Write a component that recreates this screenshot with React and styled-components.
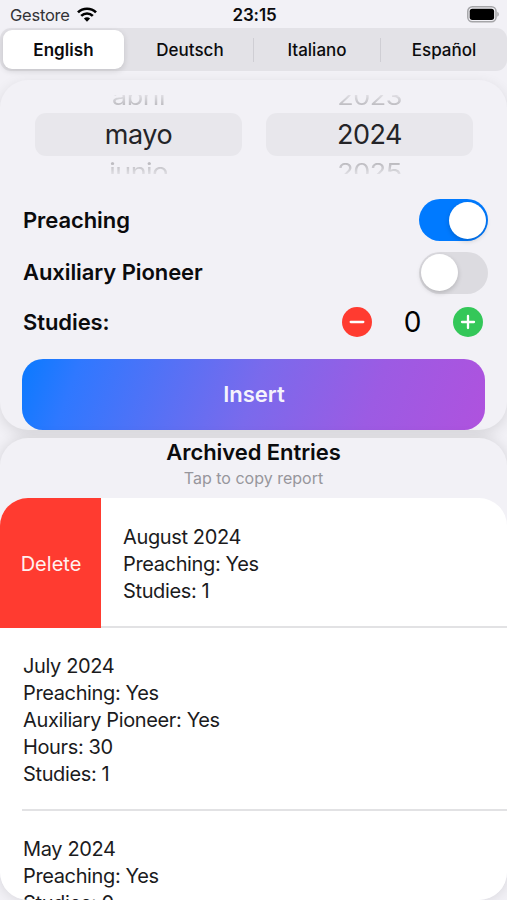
import React from 'react';
import styled, { createGlobalStyle } from 'styled-components';

const GlobalStyle = createGlobalStyle`
  * {
    box-sizing: border-box;
  }

  body {
    margin: 0;
    background: #f2f1f6;
    font-family: Inter, 'Liberation Sans', sans-serif;
    color: #0b0b0d;
  }

  button {
    font-family: inherit;
    border: none;
    padding: 0;
    margin: 0;
    color: inherit;
  }
`;

// Styled components
const Screen = styled.div`
  height: 900px;
  display: flex;
  flex-direction: column;
  overflow: hidden;
  background: #f2f1f6;
`;

const StatusBar = styled.header`
  display: grid;
  grid-template-columns: 1fr auto 1fr;
  align-items: center;
  height: 28px;
  padding: 1px 8px 0 10px;
  flex-shrink: 0;
`;

const Carrier = styled.div`
  display: flex;
  align-items: center;
  gap: 7px;
  font-size: 16.5px;
  letter-spacing: -0.25px;
  color: #333336;
`;

const Clock = styled.div`
  font-size: 17px;
  font-weight: 600;
  letter-spacing: -0.1px;
`;

const BatteryIcon = styled.svg`
  justify-self: end;
`;

const Segments = styled.nav`
  display: flex;
  align-items: center;
  height: 43px;
  padding: 2px 0 2px 3px;
  background: #e3e2e7;
  border-radius: 11px;
  flex-shrink: 0;
`;

const Segment = styled.button`
  flex: ${(props) => (props.$active ? '0 0 121px' : '1')};
  height: ${(props) => (props.$active ? '39px' : '24px')};
  margin-right: ${(props) => (props.$active ? '3px' : '0')};
  background: ${(props) => (props.$active ? '#ffffff' : 'transparent')};
  border-radius: ${(props) => (props.$active ? '9px' : '0')};
  border-left: ${(props) => (props.$divider ? '1px solid #cfced4' : 'none')};
  box-shadow: ${(props) => (props.$active ? '0 2px 6px rgba(0, 0, 0, 0.14)' : 'none')};
  font-size: 17px;
  font-weight: ${(props) => (props.$active ? 600 : 500)};
  letter-spacing: ${(props) => (props.$active ? '0.05px' : '0')};
`;

const Cards = styled.main`
  flex: 1;
  min-height: 0;
  display: flex;
  flex-direction: column;
  gap: 8px;
  padding-top: 9px;
`;

const Card = styled.section`
  background: #f2f1f6;
  border-radius: 28px;
  box-shadow: 0 0 14px rgba(0, 0, 0, 0.12);
`;

const FormCard = styled(Card)`
  height: 350px;
  padding: 15px 22px 0;
  flex-shrink: 0;
  box-shadow: 0 4px 14px rgba(0, 0, 0, 0.11);
`;

const ArchiveCard = styled(Card)`
  flex: 1;
  min-height: 0;
  display: flex;
  flex-direction: column;
`;

const Pickers = styled.div`
  display: grid;
  grid-template-columns: 207px 207px;
  gap: 24px;
  padding-left: 13px;
`;

const Wheel = styled.div`
  display: flex;
  flex-direction: column;
  height: 79px;
  text-align: center;
  font-size: 27px;
  overflow: hidden;
`;

const WheelNeighbor = styled.div`
  height: 18px;
  display: flex;
  flex-direction: column;
  align-items: center;
  justify-content: ${(props) => (props.$above ? 'flex-end' : 'flex-start')};
  overflow: hidden;
  color: #b5b4b9;
  mask-image: linear-gradient(${(props) => (props.$above ? 'to bottom' : 'to top')}, rgba(0, 0, 0, 0.3), #000 70%);

  span {
    display: block;
    line-height: 28px;
    flex-shrink: 0;
    letter-spacing: -0.5px;
    transform: scaleY(0.85);
    transform-origin: ${(props) => (props.$above ? 'bottom' : 'top')};
    margin: ${(props) => (props.$above ? '0 0 4px' : '4px 0 0')};
  }
`;

const WheelValue = styled.div`
  height: 43px;
  flex-shrink: 0;
  line-height: 44px;
  border-radius: 11px;
  background: #e8e7ec;
  color: #242428;
  letter-spacing: -0.5px;
`;

const FormRow = styled.div`
  display: flex;
  align-items: center;
  justify-content: space-between;
  height: ${(props) => props.$height}px;
  padding-left: 1px;
`;

const Fields = styled.div`
  padding-top: 20px;
  height: 185px;
`;

const Label = styled.span`
  padding-bottom: 1px;
  font-size: 22px;
  font-weight: 600;
  letter-spacing: -0.08px;
`;

const Toggle = styled.button`
  display: flex;
  align-items: center;
  justify-content: ${(props) => (props.$on ? 'flex-end' : 'flex-start')};
  width: 69px;
  height: 42px;
  margin-right: -3px;
  padding: 0 2px;
  border-radius: 21px;
  background: ${(props) => (props.$on ? '#007aff' : '#dcdbe0')};
`;

const Knob = styled.span`
  width: 37px;
  height: 37px;
  border-radius: 50%;
  background: #ffffff;
  box-shadow: 0 2px 5px rgba(0, 0, 0, 0.18);
`;

const Stepper = styled.div`
  display: flex;
  align-items: center;
  margin-right: 2px;
  padding-bottom: 1px;
`;

const StepButton = styled.button`
  display: flex;
  width: 30px;
  height: 30px;
  border-radius: 50%;
  background: ${(props) => props.$color};
`;

const Count = styled.span`
  width: 81px;
  text-align: center;
  font-size: 28px;
  color: #000000;
`;

const InsertButton = styled.button`
  display: block;
  width: 463px;
  height: 71px;
  padding: 0 0 2px 1px;
  border-radius: 21px;
  background: linear-gradient(110deg, #0a7aff 0%, #2f78ff 12%, #7a6aec 50%, #9c5be3 75%, #af52de 100%);
  color: #f5f3fc;
  font-size: 22px;
  font-weight: 600;
`;

const ArchiveHeader = styled.div`
  height: 60px;
  flex-shrink: 0;
  text-align: center;
`;

const ArchiveTitle = styled.h2`
  margin: 0;
  font-size: 22px;
  line-height: 28px;
  font-weight: 600;
  letter-spacing: -0.06px;
`;

const ArchiveHint = styled.p`
  margin: 0;
  font-size: 16px;
  line-height: 25px;
  color: #97969c;
`;

const EntryList = styled.div`
  flex: 1;
  min-height: 0;
  overflow: hidden;
  background: #ffffff;
  border-radius: 28px;
`;

const SwipedRow = styled.div`
  display: flex;
  height: 130px;
`;

const DeleteButton = styled.button`
  width: 101px;
  padding: 2px 0 0 1px;
  background: #ff3b30;
  color: #fff1ef;
  font-size: 20px;
`;

const Entry = styled.div`
  flex: 1;
  margin-left: ${(props) => (props.$swiped ? '0' : '22px')};
  padding: ${(props) => (props.$swiped ? '26px 0 0 22px' : '25px 0 21px 1px')};
  border-bottom: 2px solid #e2e2e4;
  font-size: 20px;
  line-height: 27px;
  letter-spacing: -0.37px;
  color: #1b1b1d;
`;

const segments = ['English', 'Deutsch', 'Italiano', 'Español'];

const wheels = [
  { above: 'abril', value: 'mayo', below: 'junio' },
  { above: '2023', value: '2024', below: '2025' },
];

const entries = [
  ['July 2024', 'Preaching: Yes', 'Auxiliary Pioneer: Yes', 'Hours: 30', 'Studies: 1'],
  ['May 2024', 'Preaching: Yes', 'Studies: 0'],
];

const Wifi = () => (
  <svg width="20" height="15" viewBox="0 0 20 15" fill="none" stroke="#000" strokeWidth="2.7">
    <path d="M1 5.4C6 .5 14 .5 19 5.4" />
    <path d="M4.2 8.9c3.3-3.2 8.3-3.2 11.6 0" />
    <path d="M10 14.7 6.9 11.5c1.7-1.6 4.5-1.6 6.2 0z" fill="#000" stroke="none" />
  </svg>
);

const Battery = () => (
  <BatteryIcon width="33" height="17" viewBox="0 0 33 17">
    <rect x="1.8" y="0.8" width="28.2" height="15" rx="4.5" fill="none" stroke="#a5a5a8" strokeWidth="1.5" />
    <rect x="3.7" y="2.7" width="24.4" height="11.2" rx="2.6" fill="#000" />
    <path d="M31.3 5.8c2 .8 2 4.2 0 5z" fill="#a5a5a8" />
  </BatteryIcon>
);

const StepIcon = ({ plus }) => (
  <svg width="30" height="30" viewBox="0 0 30 30" stroke="#fff" strokeWidth="2.3" strokeLinecap="round">
    <path d={plus ? 'M9 15h12M15 9v12' : 'M8.7 15h12.6'} />
  </svg>
);

const Lines = ({ lines }) => lines.map((line) => <div key={line}>{line}</div>);

const App = () => (
  <Screen>
    <GlobalStyle />
    <StatusBar>
      <Carrier>
        Gestore
        <Wifi />
      </Carrier>
      <Clock>23:15</Clock>
      <Battery />
    </StatusBar>

    <Segments>
      {segments.map((name, index) => (
        <Segment key={name} $active={index === 0} $divider={index > 1}>
          {name}
        </Segment>
      ))}
    </Segments>

    <Cards>
      <FormCard>
        <Pickers>
          {wheels.map((wheel) => (
            <Wheel key={wheel.value}>
              <WheelNeighbor $above><span>{wheel.above}</span></WheelNeighbor>
              <WheelValue>{wheel.value}</WheelValue>
              <WheelNeighbor><span>{wheel.below}</span></WheelNeighbor>
            </Wheel>
          ))}
        </Pickers>
        <Fields>
          <FormRow $height={52}>
            <Label>Preaching</Label>
            <Toggle $on><Knob /></Toggle>
          </FormRow>
          <FormRow $height={53}>
            <Label>Auxiliary Pioneer</Label>
            <Toggle><Knob /></Toggle>
          </FormRow>
          <FormRow $height={47}>
            <Label>Studies:</Label>
            <Stepper>
              <StepButton $color="#ff3b30"><StepIcon /></StepButton>
              <Count>0</Count>
              <StepButton $color="#34c759"><StepIcon plus /></StepButton>
            </Stepper>
          </FormRow>
        </Fields>
        <InsertButton>Insert</InsertButton>
      </FormCard>

      <ArchiveCard>
        <ArchiveHeader>
          <ArchiveTitle>Archived Entries</ArchiveTitle>
          <ArchiveHint>Tap to copy report</ArchiveHint>
        </ArchiveHeader>
        <EntryList>
          <SwipedRow>
            <DeleteButton>Delete</DeleteButton>
            <Entry $swiped>
              <Lines lines={['August 2024', 'Preaching: Yes', 'Studies: 1']} />
            </Entry>
          </SwipedRow>
          {entries.map((lines) => (
            <Entry key={lines[0]}>
              <Lines lines={lines} />
            </Entry>
          ))}
        </EntryList>
      </ArchiveCard>
    </Cards>
  </Screen>
);

export default App;
